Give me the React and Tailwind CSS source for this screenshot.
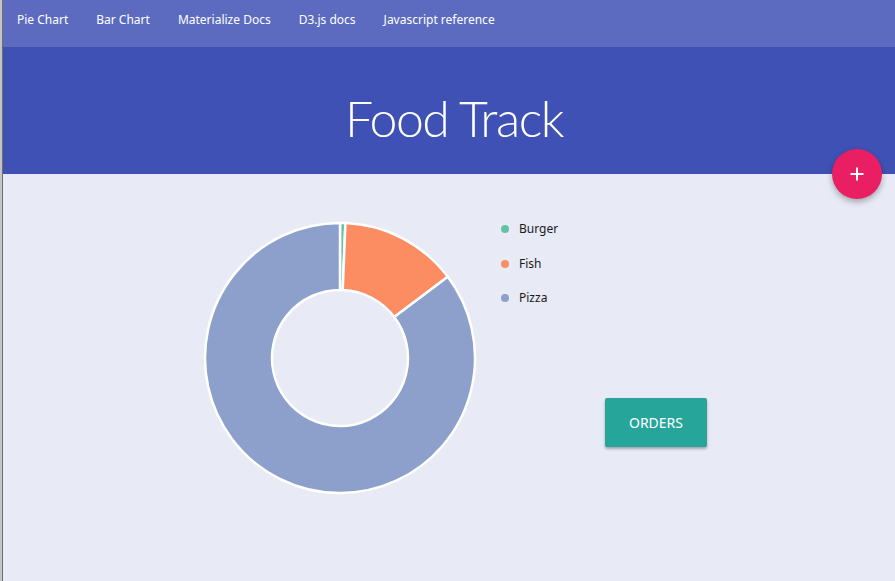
import React from 'react';

const slices = [
    { name: 'Burger', color: '#66c2a5', from: 0, to: 2.3 },
    { name: 'Fish', color: '#fc8d62', from: 2.3, to: 53 },
    { name: 'Pizza', color: '#8da0cb', from: 53, to: 360 },
];

const arcPath = (from, to, R, r, c) => {
    const a0 = (from * Math.PI) / 180;
    const a1 = (to * Math.PI) / 180;
    const p = (rad, a) => `${(c + rad * Math.sin(a)).toFixed(2)} ${(c - rad * Math.cos(a)).toFixed(2)}`;
    const large = to - from > 180 ? 1 : 0;
    return `M ${p(R, a0)} A ${R} ${R} 0 ${large} 1 ${p(R, a1)} L ${p(r, a1)} A ${r} ${r} 0 ${large} 0 ${p(r, a0)} Z`;
};

const Donut = () => (
    <svg width="274" height="274" viewBox="0 0 274 274">
        {slices.map((s) => (
            <path key={s.name} d={arcPath(s.from, s.to, 135, 68, 137)} fill={s.color} stroke="#ffffff" strokeWidth="2.5" />
        ))}
    </svg>
);

const links = ['Pie Chart', 'Bar Chart', 'Materialize Docs', 'D3.js docs', 'Javascript reference'];

const App = () => {
    return (
        <div className="relative flex min-h-screen bg-[#e8eaf6] font-['Noto_Sans',sans-serif]">
            <div className="w-[3px] shrink-0 bg-[#c4c4c4] border-r border-[#6e6e6e]" />
            <div className="flex-1 flex flex-col">
                <nav className="h-[47px] bg-[#5c6bc0] flex items-start pt-[10px]">
                    {links.map((l) => (
                        <a key={l} className="px-[14px] text-[12px] text-white leading-[20px]">{l}</a>
                    ))}
                </nav>
                <header className="h-[127px] bg-[#3f51b5] flex items-center justify-center pl-[10px]">
                    <h1 className="font-['Lato',sans-serif] text-[50px] font-light tracking-[-1.5px] text-white leading-none pt-[14px]">Food Track</h1>
                </header>
                <main className="flex pt-[38px] pl-[200px]">
                    <div className="mt-[9px]">
                        <Donut />
                    </div>
                    <div className="ml-[24px] flex flex-col">
                        {slices.map((s) => (
                            <div key={s.name} className="h-[34.5px] flex items-center gap-[10px]">
                                <span className="w-[8px] h-[8px] rounded-full" style={{ backgroundColor: s.color }} />
                                <span className="text-[12px] text-[#1a1a1a]">{s.name}</span>
                            </div>
                        ))}
                        <button className="ml-[104px] mt-[82px] w-[102px] h-[49px] bg-[#26a69a] rounded-[2px] text-white text-[14px] uppercase shadow-[0_2px_3px_rgba(0,0,0,0.3)]">
                            Orders
                        </button>
                    </div>
                </main>
            </div>
            <button className="absolute top-[149px] right-[13px] w-[50px] h-[50px] rounded-full bg-[#e91e63] flex items-center justify-center shadow-[0_3px_6px_rgba(0,0,0,0.3)]">
                <svg width="14" height="14" viewBox="0 0 14 14">
                    <path d="M7 0.5 V13.5 M0.5 7 H13.5" stroke="#ffffff" strokeWidth="2" />
                </svg>
            </button>
        </div>
    );
};

export default App;
